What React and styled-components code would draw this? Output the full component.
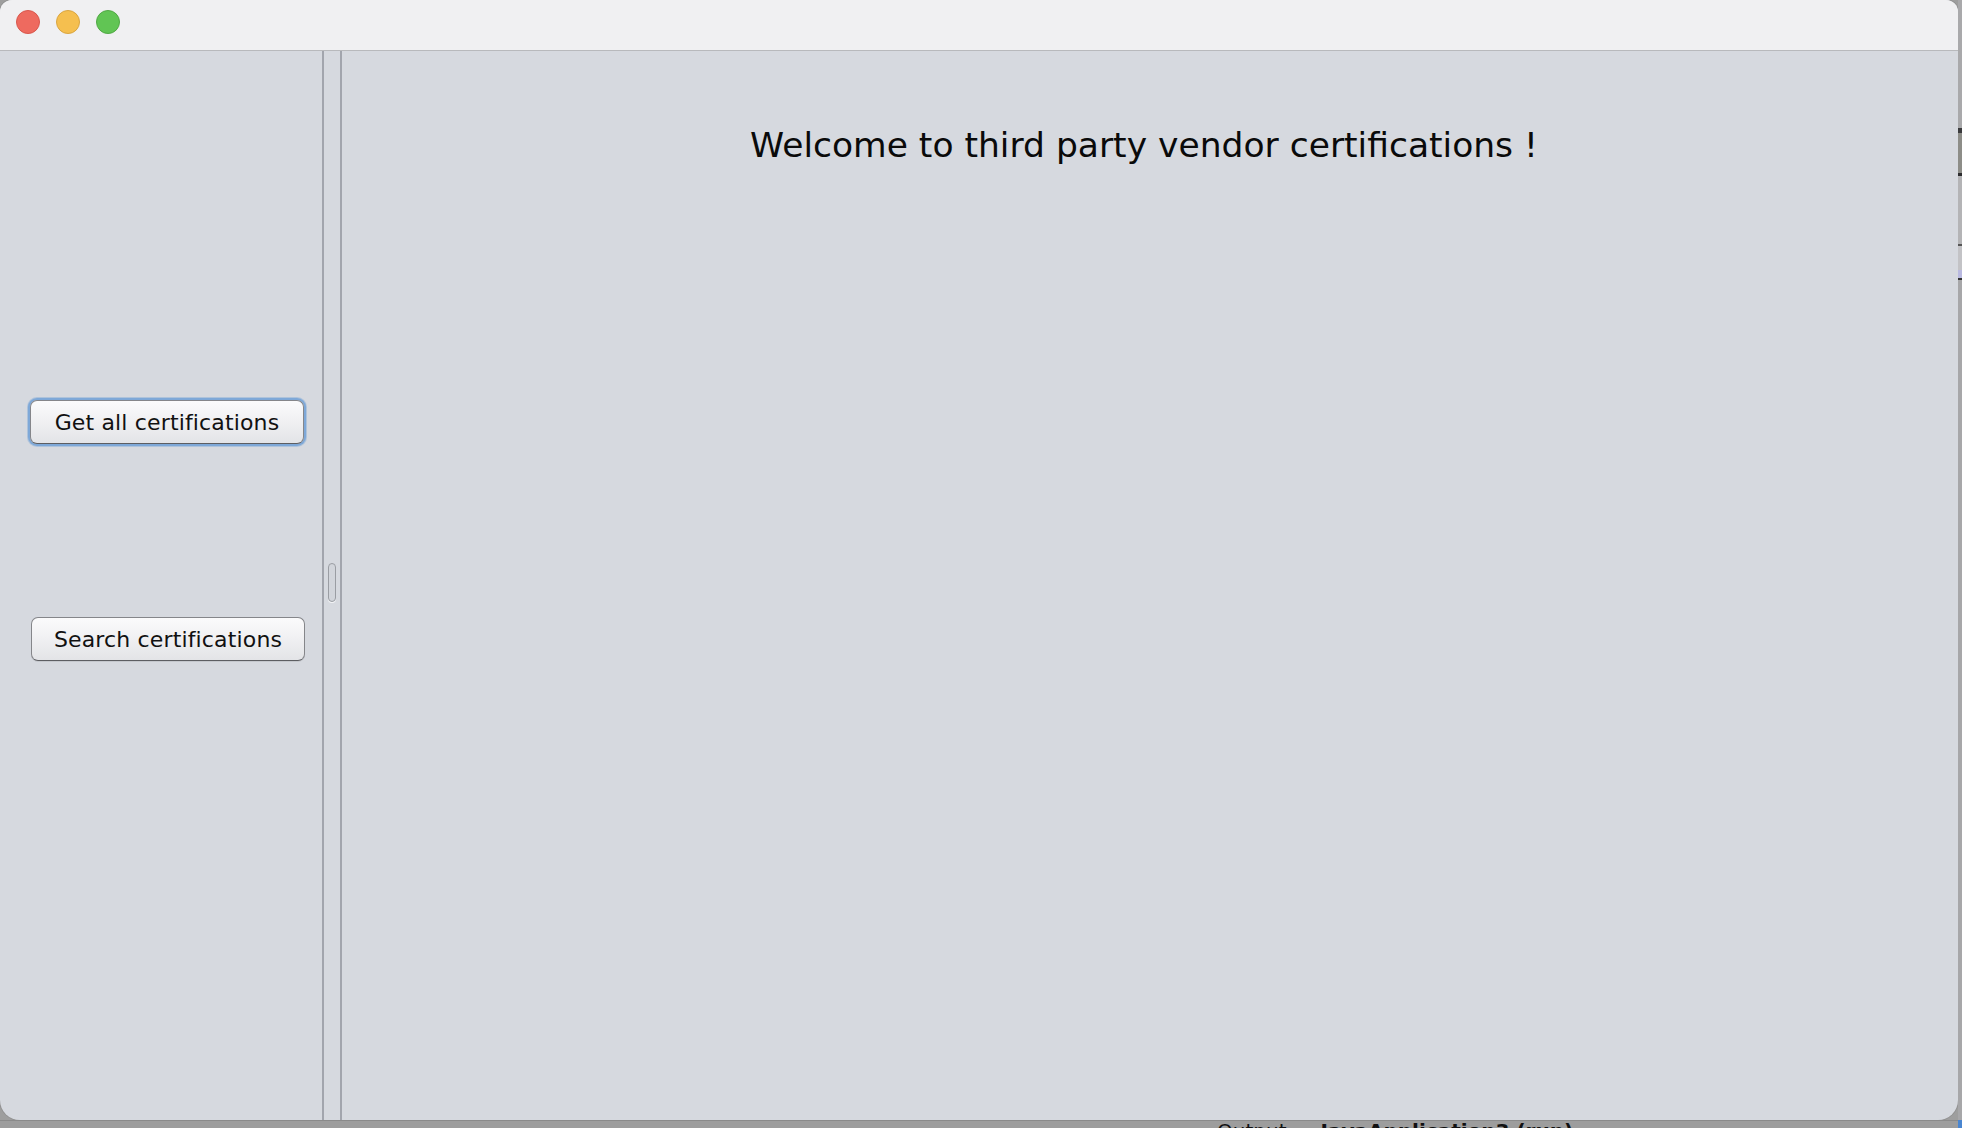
import React from 'react'
import styled, { createGlobalStyle } from 'styled-components'

const Global = createGlobalStyle`
  html, body {
    margin: 0;
    padding: 0;
    overflow: hidden;
    background: #9e9e9e;
  }
  * { box-sizing: border-box; }
`;

const Desktop = styled.div`
  width: 1962px;
  height: 1128px;
  display: grid;
  grid-template-columns: 1958px 4px;
  grid-template-rows: 1120px 8px;
  background: #9e9e9e;
  font-family: "DejaVu Sans", "Liberation Sans", sans-serif;
  overflow: hidden;
`;

const Window = styled.div`
  grid-column: 1;
  grid-row: 1;
  display: flex;
  flex-direction: column;
  background: #d6d9df;
  border-radius: 12px 12px 20px 20px;
  overflow: hidden;
  box-shadow: 0 0 0 1px rgba(0,0,0,0.08);
`;

const Edge = styled.div`
  grid-column: 2;
  grid-row: 1 / span 2;
  display: flex;
  flex-direction: column;
  background: #a9a9ab;
`;

const EdgeBit = styled.div`
  height: ${({ h }) => h}px;
  background: ${({ c }) => c};
  flex-shrink: 0;
`;

const Dock = styled.div`
  grid-column: 1;
  grid-row: 2;
  background: #9d9d9d;
  border-top: 1px solid #8a8a8a;
  overflow: hidden;
  display: flex;
  gap: 34px;
  padding-left: 1217px;
  font-size: 20px;
  line-height: 1;
  color: #111;
`;

const DockLabel = styled.span`
  font-weight: ${({ bold }) => (bold ? 700 : 400)};
  white-space: nowrap;
`;

const TitleBar = styled.div`
  height: 51px;
  flex-shrink: 0;
  background: #f0f0f2;
  border-bottom: 1px solid #b8b9bc;
  display: flex;
  align-items: flex-start;
  gap: 16px;
  padding: 10px 0 0 16px;
`;

const Light = styled.div`
  width: 24px;
  height: 24px;
  border-radius: 50%;
  background: ${({ fill }) => fill};
  border: 1px solid ${({ ring }) => ring};
`;

const Body = styled.div`
  flex: 1;
  display: flex;
`;

const Sidebar = styled.div`
  width: 322px;
  flex-shrink: 0;
  display: flex;
  flex-direction: column;
  align-items: flex-start;
  padding: 349px 0 0 30px;
  gap: 173px;
`;

const Button = styled.button`
  width: 274px;
  height: 44px;
  margin-left: ${({ focused }) => (focused ? 0 : 1)}px;
  font-family: "DejaVu Sans", "Liberation Sans", sans-serif;
  font-size: 22px;
  letter-spacing: 0.15px;
  color: #111;
  border-radius: 7px;
  border: 1px solid #85868a;
  border-bottom-color: #5d5e62;
  background: linear-gradient(#fbfbfc 0%, #f1f1f3 45%, #e3e4e7 100%);
  box-shadow: ${({ focused }) =>
    focused ? '0 0 0 2px #7ea8d8, 0 0 0 3px rgba(126,168,216,0.45)' : '0 1px 0 rgba(0,0,0,0.08)'};
  padding: 0;
`;

const Splitter = styled.div`
  width: 20px;
  flex-shrink: 0;
  display: flex;
  justify-content: space-between;
  position: relative;
`;

const SplitLine = styled.div`
  width: 2px;
  background: #a2a5ad;
`;

const Grip = styled.div`
  position: absolute;
  left: 6px;
  top: 512px;
  width: 8px;
  height: 39px;
  border-radius: 4px;
  border: 1px solid #9a9da3;
  background: #d2d5db;
  box-shadow: 0 1px 0 #f4f5f7;
`;

const Main = styled.div`
  flex: 1;
  display: flex;
  justify-content: center;
  padding: 77px 12px 0 0;
`;

const Heading = styled.h1`
  margin: 0;
  font-size: 34.5px;
  font-weight: 400;
  color: #0a0a0a;
  line-height: 1;
`;

export default function App() {
  return (
    <>
      <Global />
      <Desktop>
        <Window>
          <TitleBar>
            <Light fill="#ee6a5f" ring="#d8574d" />
            <Light fill="#f5bf4f" ring="#d9a541" />
            <Light fill="#61c554" ring="#51a845" />
          </TitleBar>
          <Body>
            <Sidebar>
              <Button focused>Get all certifications</Button>
              <Button>Search certifications</Button>
            </Sidebar>
            <Splitter>
              <SplitLine />
              <Grip />
              <SplitLine />
            </Splitter>
            <Main>
              <Heading>Welcome to third party vendor certifications !</Heading>
            </Main>
          </Body>
        </Window>
        <Edge>
          <EdgeBit h={128} c="#a9a9ab" />
          <EdgeBit h={5} c="#3a3a3c" />
          <EdgeBit h={40} c="#8d8d88" />
          <EdgeBit h={3} c="#2c2c2e" />
          <EdgeBit h={68} c="#b4b4b6" />
          <EdgeBit h={2} c="#555" />
          <EdgeBit h={24} c="#c3c3c6" />
          <EdgeBit h={8} c="#b9b9e0" />
          <EdgeBit h={2} c="#333" />
          <EdgeBit h={840} c="#a7a7a9" />
          <EdgeBit h={8} c="#4a86d0" />
        </Edge>
        <Dock>
          <DockLabel>Output</DockLabel>
          <DockLabel bold>JavaApplication3 (run)</DockLabel>
        </Dock>
      </Desktop>
    </>
  )
}
